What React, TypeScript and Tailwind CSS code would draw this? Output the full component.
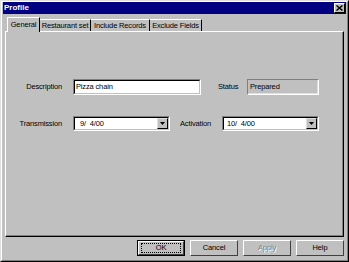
import React from "react";

const font = { fontFamily: '"Liberation Sans", Arial, sans-serif' };
const txt = "text-[7.5px] tracking-[-0.15px] text-black";

function Sunken({ children, className, inner }: { children: React.ReactNode; className: string; inner: string }) {
  return (
    <div className={`border border-t-[#808080] border-l-[#808080] border-b-white border-r-white ${className}`}>
      <div className={`flex h-full ${inner}`}>{children}</div>
    </div>
  );
}

function Combo({ value }: { value: string }) {
  return (
    <Sunken className="h-[15px] w-[97px]" inner="border border-t-black border-l-black border-b-[#c0c0c0] border-r-[#c0c0c0] bg-white">
      <div className={`flex-1 whitespace-pre pl-[3px] leading-[12px] ${txt}`}>{value}</div>
      <div className="flex h-[11px] w-[11px] items-center justify-center border border-t-[#dfdfdf] border-l-[#dfdfdf] border-b-black border-r-black bg-[#c0c0c0]">
        <svg width="5" height="3" viewBox="0 0 5 3"><path d="M0 0h5L2.5 3z" fill="#000" /></svg>
      </div>
    </Sunken>
  );
}

function Btn({ label, def, disabled }: { label: string; def?: boolean; disabled?: boolean }) {
  return (
    <div className={`h-[16px] w-[48px] ${def ? "border border-black" : ""}`}>
      <div className="flex h-full w-full items-center justify-center border border-t-white border-l-white border-b-[#404040] border-r-[#404040] bg-[#c0c0c0]">
        {def ? (
          <div className="flex h-[10px] w-[40px] items-center justify-center border border-dotted border-black">
            <span className={`leading-none ${txt}`}>{label}</span>
          </div>
        ) : (
          <span className={`text-[7.5px] tracking-[-0.15px] leading-none ${disabled ? "text-[#808080] [text-shadow:1px_1px_0_#fff]" : "text-black"}`}>{label}</span>
        )}
      </div>
    </div>
  );
}

function Tab({ label, active, w }: { label: string; active?: boolean; w: string }) {
  if (active)
    return (
      <div className={`relative z-10 -mb-[1px] ml-[2px] flex h-[15px] ${w} items-center justify-center border-l border-t border-r border-l-white border-t-white border-r-black bg-[#c0c0c0]`}>
        <span className={`leading-none ${txt}`}>{label}</span>
      </div>
    );
  return (
    <div className={`flex h-[12px] ${w} items-center justify-center border-t border-r border-t-white border-r-black`}>
      <span className={`leading-none ${txt}`}>{label}</span>
    </div>
  );
}

export default function App() {
  return (
    <div style={font} className="h-[262px] w-[349px] bg-[#c0c0c0] border border-t-[#dfdfdf] border-l-[#dfdfdf] border-b-black border-r-black">
      <div className="flex h-full w-full flex-col border border-t-white border-l-white border-b-[#808080] border-r-[#808080]">
        <div className="mx-[1px] flex h-[12px] items-center justify-between bg-[#000080] pl-[1px] pr-[1px]">
          <span className="text-[8px] font-bold leading-none text-white">Profile</span>
          <div className="flex h-[10px] w-[11px] items-center justify-center border border-t-white border-l-white border-b-black border-r-black bg-[#c0c0c0]">
            <svg width="7" height="6" viewBox="0 0 7 6"><path d="M0.5 0.5L6.5 5.5M6.5 0.5L0.5 5.5" stroke="#000" strokeWidth="1.5" /></svg>
          </div>
        </div>
        <div className="flex flex-1 flex-col px-[3px] pt-[3px]">
          <div className="flex h-[14px] items-end">
            <Tab label="General" active w="w-[33px]" />
            <Tab label="Restaurant set" w="w-[51px]" />
            <Tab label="Include Records" w="w-[59px]" />
            <Tab label="Exclude Fields" w="w-[52px]" />
          </div>
          <div className="h-[206px] border border-t-white border-l-white border-b-black border-r-black">
            <div className="h-full border-b border-r border-b-[#808080] border-r-[#808080] pt-[47px]">
              <div className="flex h-[16px] items-center">
                <span className={`w-[56px] text-right ${txt}`}>Description</span>
                <Sunken className="ml-[11px] h-[16px] w-[128px]" inner="border border-t-black border-l-black border-b-[#c0c0c0] border-r-[#c0c0c0] bg-white">
                  <span className={`pl-[1px] leading-[12px] ${txt}`}>Pizza chain</span>
                </Sunken>
                <span className={`ml-[17px] w-[29px] ${txt}`}>Status</span>
                <Sunken className="h-[16px] w-[72px]" inner="border border-t-[#c0c0c0] border-l-[#c0c0c0] border-b-[#dfdfdf] border-r-[#dfdfdf]">
                  <span className={`pl-[1px] leading-[12px] ${txt}`}>Prepared</span>
                </Sunken>
              </div>
              <div className="mt-[21px] flex h-[15px] items-center">
                <span className={`w-[56px] text-right ${txt}`}>Transmission</span>
                <div className="ml-[11px]"><Combo value=" 9/  4/00" /></div>
                <span className={`ml-[10px] w-[42px] ${txt}`}>Activation</span>
                <Combo value="10/  4/00" />
              </div>
            </div>
          </div>
          <div className="mt-[3px] flex justify-end gap-[5px]">
            <Btn label="OK" def />
            <Btn label="Cancel" />
            <Btn label="Apply" disabled />
            <Btn label="Help" />
          </div>
        </div>
      </div>
    </div>
  );
}
